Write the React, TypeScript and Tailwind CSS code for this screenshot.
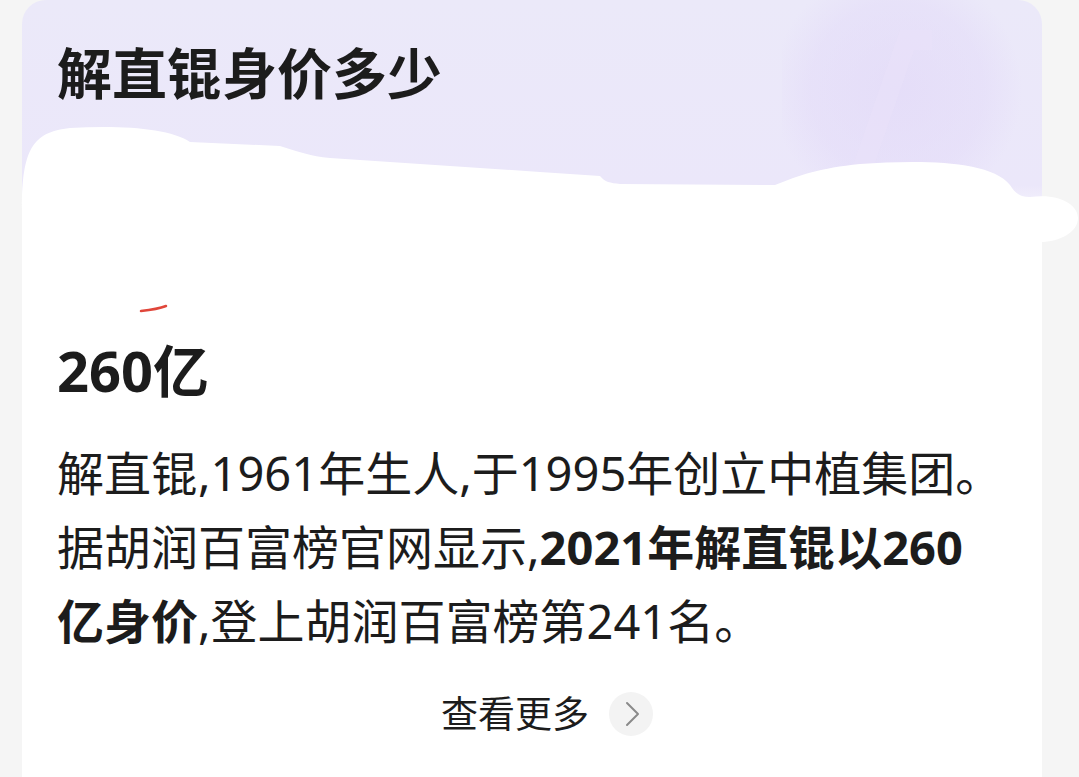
import React from 'react'

const Smudge = () => (
    <svg className="absolute left-0 top-0 z-10 pointer-events-none" width="1079" height="320" viewBox="0 0 1079 320">
        <path
            d="M 22 210 C 22 150, 32 132, 70 128 C 120 125, 170 128, 190 142 L 280 146 C 300 152, 310 156, 330 158 L 540 172 L 600 176 C 605 182, 610 183, 620 184 L 775 185 C 800 175, 820 168, 860 164 C 920 160, 990 160, 1010 185 C 1015 193, 1020 197, 1030 197 C 1060 193, 1078 205, 1078 218 C 1078 232, 1060 242, 1040 242 L 1040 300 L 22 300 Z"
            fill="#ffffff"
        />
        <path d="M 141 311 C 150 310, 158 309, 166 306" stroke="#e0463a" strokeWidth="2.5" fill="none" strokeLinecap="round" />
    </svg>
)

const Watermark = () => (
    <svg className="absolute right-0 top-0 pointer-events-none" width="260" height="190" viewBox="0 0 260 190">
        <defs>
            <radialGradient id="wm" cx="50%" cy="50%" r="50%">
                <stop offset="0%" stopColor="#e0d5f8" stopOpacity="0.55" />
                <stop offset="70%" stopColor="#e0d5f8" stopOpacity="0.35" />
                <stop offset="100%" stopColor="#e0d5f8" stopOpacity="0" />
            </radialGradient>
        </defs>
        <circle cx="115" cy="90" r="125" fill="url(#wm)" />
        <path d="M 80 170 L 125 40 L 150 40" stroke="#e9e2fa" strokeWidth="20" fill="none" opacity="0.5" />
    </svg>
)

export default function App() {
    return (
        <div className="relative w-full h-[777px] overflow-hidden bg-[#f5f5f5] font-['Noto_Sans','Noto_Sans_CJK_SC',sans-serif] text-[#1c1c1c]">
            <Smudge />
            <div className="relative ml-[22px] w-[1020px] h-[820px] rounded-t-[24px] bg-[linear-gradient(180deg,#ebe9f9_0%,#ebe7fa_185px,#ffffff_235px)] px-[35px] pt-[41px]">
                <Watermark />
                <h1 className="relative text-[55px] leading-[64px] font-bold">解直锟身价多少</h1>

                <div className="h-[233px]" />

                <p className="text-[56px] leading-[64px] font-bold">260亿</p>

                <div className="mt-[34px] text-[47px] leading-[74px] whitespace-nowrap">
                    <p>解直锟,1961年生人,于1995年创立中植集团。</p>
                    <p>据胡润百富榜官网显示,<span className="font-bold">2021年解直锟以260</span></p>
                    <p><span className="font-bold">亿身价</span>,登上胡润百富榜第241名。</p>
                </div>

                <div className="mt-[34px] flex items-center justify-center gap-[20px] pl-[30px]">
                    <span className="text-[37px] leading-[44px]">查看更多</span>
                    <span className="w-[44px] h-[44px] rounded-full bg-[#f3f3f3] flex items-center justify-center">
                        <svg width="20" height="26" viewBox="0 0 20 26" fill="none">
                            <path d="M 6 2 L 17 13 L 6 24" stroke="#8a8a8a" strokeWidth="2" strokeLinecap="round" strokeLinejoin="round" />
                        </svg>
                    </span>
                </div>
            </div>
        </div>
    )
}
